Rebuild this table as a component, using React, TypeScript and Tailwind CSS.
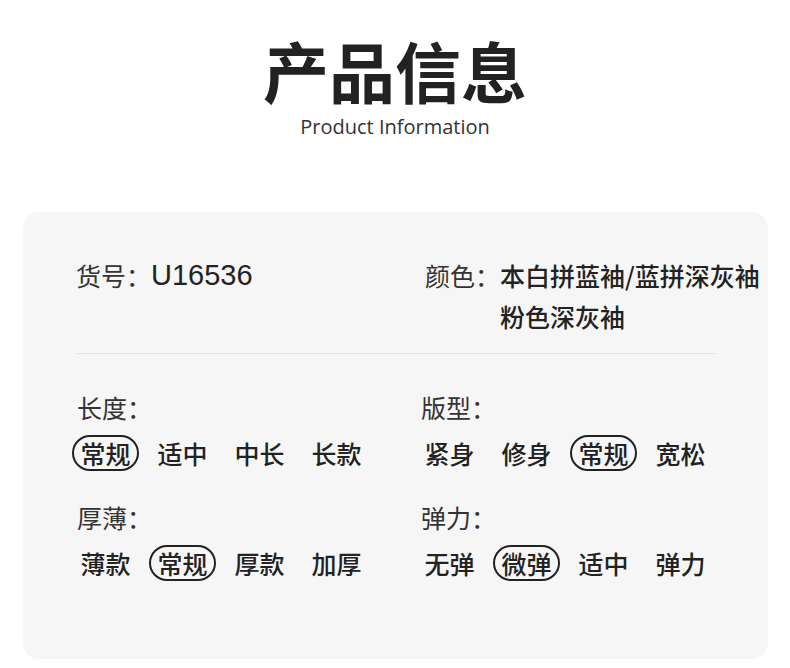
import React from "react";

const cjk = { fontFamily: '"Noto Sans CJK SC", "Noto Sans", sans-serif' };

type Opt = { text: string; on?: boolean };

function Options({ items }: { items: Opt[] }) {
  return (
    <div className="mt-[13px] flex gap-[10px]">
      {items.map((o, i) => (
        <div
          key={i}
          className={
            "flex h-[36px] w-[67px] items-center justify-center rounded-full text-[25px] font-medium leading-none text-[#222] " +
            (o.on ? "border-2 border-[#222]" : "border-2 border-transparent")
          }
        >
          {o.text}
        </div>
      ))}
    </div>
  );
}

function Group({ label, items, pad }: { label: string; items: Opt[]; pad: string }) {
  return (
    <div>
      <div className={"text-[25px] leading-[30px] text-[#333] " + pad}>{label}</div>
      <Options items={items} />
    </div>
  );
}

export default function App() {
  return (
    <div className="h-[668px] w-[790px] overflow-hidden bg-white" style={cjk}>
      <div className="mt-[36px] text-center text-[66px] font-bold leading-[66px] text-[#222]">
        产品信息
      </div>
      <div
        className="mt-[13px] text-center text-[20px] leading-[24px] text-[#333]"
        style={{ fontFamily: '"Open Sans", "Liberation Sans", sans-serif' }}
      >
        Product Information
      </div>
      <div className="ml-[23px] mr-[22px] mt-[73px] rounded-[16px] bg-[#f6f6f6] pb-[78px] pt-[43px]">
        <div className="flex pl-[49px]">
          <div className="flex w-[344px] pl-[4px] text-[25px] leading-[41px] text-[#333]">
            <span>货号：</span>
            <span
              className="text-[29px] text-[#222]"
              style={{ fontFamily: '"Liberation Sans", Arial, sans-serif' }}
            >
              U16536
            </span>
          </div>
          <div className="flex pl-[9px] text-[25px] leading-[41px]">
            <span className="text-[#333]">颜色：</span>
            <span className="whitespace-nowrap font-medium text-[#222]">
              本白拼蓝袖/蓝拼深灰袖
              <br />
              粉色深灰袖
            </span>
          </div>
        </div>
        <div className="mx-[53px] mt-[16px] h-px bg-[#e2e2e2]" />
        <div className="mt-[38px] grid grid-cols-[344px_1fr] pl-[49px]">
          <Group
            label="长度："
            pad="pl-[5px]"
            items={[{ text: "常规", on: true }, { text: "适中" }, { text: "中长" }, { text: "长款" }]}
          />
          <Group
            label="版型："
            pad="pl-[5px]"
            items={[{ text: "紧身" }, { text: "修身" }, { text: "常规", on: true }, { text: "宽松" }]}
          />
        </div>
        <div className="mt-[31px] grid grid-cols-[344px_1fr] pl-[49px]">
          <Group
            label="厚薄："
            pad="pl-[5px]"
            items={[{ text: "薄款" }, { text: "常规", on: true }, { text: "厚款" }, { text: "加厚" }]}
          />
          <Group
            label="弹力："
            pad="pl-[5px]"
            items={[{ text: "无弹" }, { text: "微弹", on: true }, { text: "适中" }, { text: "弹力" }]}
          />
        </div>
      </div>
    </div>
  );
}
